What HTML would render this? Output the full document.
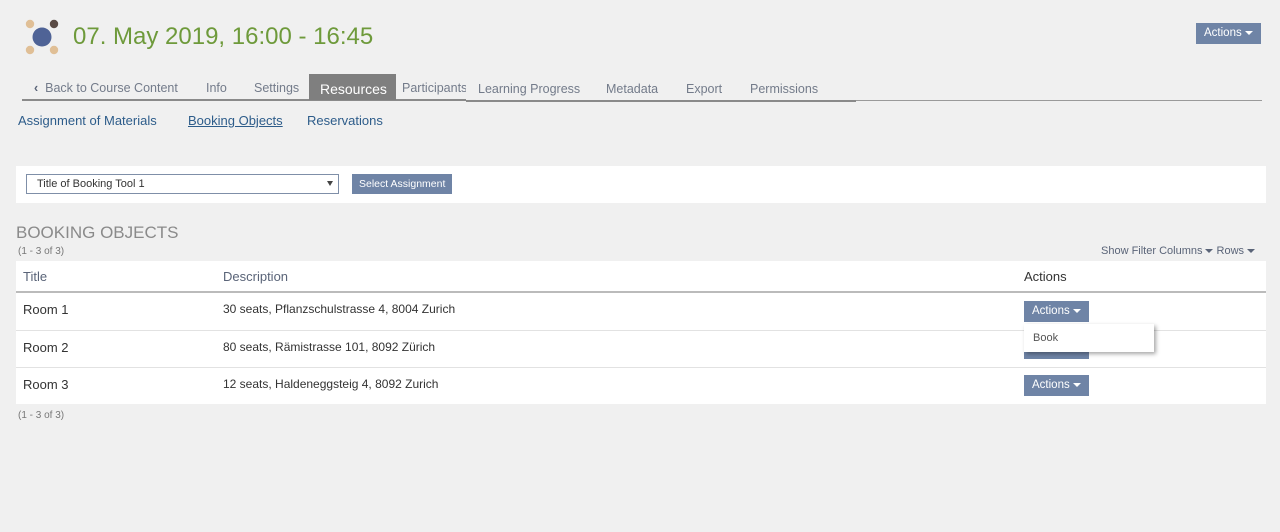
<!DOCTYPE html>
<html><head><meta charset="utf-8">
<style>
*{box-sizing:border-box;margin:0;padding:0}
body{width:1280px;height:532px;background:#f0f0f0;font-family:"Liberation Sans",sans-serif;position:relative;overflow:hidden;color:#333}
.a{position:absolute;white-space:nowrap}
.btn{position:absolute;background:#6f84a6;color:#fff;font-size:11.5px;line-height:21px;padding:0 8px;height:21px}
.car{display:inline-block;width:0;height:0;border-left:4px solid transparent;border-right:4px solid transparent;border-top:4px solid currentColor;vertical-align:middle;margin-left:3px}
.tab{position:absolute;top:81px;font-size:12.5px;color:#737b8a}
.sub{position:absolute;top:113px;font-size:13px;color:#2d5c8a}
.cell{position:absolute;font-size:13px;color:#333}
</style></head><body>
<svg class="a" style="left:24px;top:19px" width="38" height="36" viewBox="0 0 38 36">
<circle cx="6" cy="5" r="4.2" fill="#e0bf96"/><circle cx="30" cy="5" r="4.2" fill="#5a4a44"/>
<circle cx="6" cy="31" r="4.2" fill="#e0bf96"/><circle cx="30" cy="31" r="4.2" fill="#e0bf96"/>
<circle cx="18" cy="18" r="9.5" fill="#4f6396"/></svg>
<div class="a" style="left:73px;top:23px;font-size:24px;color:#6e9a3b">07. May 2019, 16:00 - 16:45</div>
<div class="btn" style="left:1196px;top:23px">Actions<span class="car"></span></div>

<div class="a" style="left:22px;top:99px;width:444px;height:2px;background:#8a8a8a"></div>
<div class="a" style="left:466px;top:100px;width:390px;height:2px;background:#8a8a8a"></div>
<div class="a" style="left:856px;top:100px;width:406px;height:1px;background:#9a9a9a"></div>
<div class="a" style="left:309px;top:74px;width:87px;height:26px;background:#7f7f7f"></div>
<div class="tab" style="left:34px"><span style="font-weight:bold;color:#5a6478">&#8249;</span>&nbsp; Back to Course Content</div>
<div class="tab" style="left:206px">Info</div>
<div class="tab" style="left:254px">Settings</div>
<div class="tab" style="left:320px;color:#fff;top:81px;font-size:14px">Resources</div>
<div class="tab" style="left:402px;width:64px;overflow:hidden">Participants</div>
<div class="tab" style="left:478px;top:82px">Learning Progress</div>
<div class="tab" style="left:606px;top:82px">Metadata</div>
<div class="tab" style="left:686px;top:82px">Export</div>
<div class="tab" style="left:750px;top:82px">Permissions</div>

<div class="sub" style="left:18px">Assignment of Materials</div>
<div class="sub" style="left:188px;text-decoration:underline">Booking Objects</div>
<div class="sub" style="left:307px">Reservations</div>

<div class="a" style="left:16px;top:166px;width:1250px;height:37px;background:#fff"></div>
<div class="a" style="left:26px;top:174px;width:313px;height:20px;border:1px solid #7f8fa8;background:#fff;font-size:11px;line-height:18px;padding-left:10px">Title of Booking Tool 1</div>
<div class="a" style="left:327px;top:181px;border-left:3px solid transparent;border-right:3px solid transparent;border-top:5px solid #444"></div>
<div class="btn" style="left:352px;top:174px;height:20px;line-height:20px;font-size:10.5px;padding:0 7px">Select Assignment</div>

<div class="a" style="left:16px;top:223px;font-size:17px;color:#8a8a8a">BOOKING OBJECTS</div>
<div class="a" style="left:18px;top:246px;font-size:10px;color:#777">(1 - 3 of 3)</div>
<div class="a" style="left:1101px;top:245px;font-size:11px;color:#5a6478">Show Filter&nbsp;Columns<span class="car"></span>&nbsp;Rows<span class="car"></span></div>

<div class="a" style="left:16px;top:261px;width:1250px;height:143px;background:#fff"></div>
<div class="a" style="left:16px;top:291px;width:1250px;height:2px;background:#bbb"></div>
<div class="a" style="left:16px;top:330px;width:1250px;height:1px;background:#e2e2e2"></div>
<div class="a" style="left:16px;top:367px;width:1250px;height:1px;background:#e2e2e2"></div>
<div class="cell" style="left:23px;top:269px;color:#5a6478">Title</div>
<div class="cell" style="left:223px;top:269px;color:#5a6478">Description</div>
<div class="cell" style="left:1024px;top:269px">Actions</div>
<div class="cell" style="left:23px;top:302px">Room 1</div>
<div class="cell" style="left:223px;top:302px;font-size:12px">30 seats, Pflanzschulstrasse 4, 8004 Zurich</div>
<div class="cell" style="left:23px;top:340px">Room 2</div>
<div class="cell" style="left:223px;top:340px;font-size:12px">80 seats, Rämistrasse 101, 8092 Zürich</div>
<div class="cell" style="left:23px;top:377px">Room 3</div>
<div class="cell" style="left:223px;top:377px;font-size:12px">12 seats, Haldeneggsteig 4, 8092 Zurich</div>
<div class="btn" style="left:1024px;top:301px">Actions<span class="car"></span></div>
<div class="btn" style="left:1024px;top:338px">Actions<span class="car"></span></div>
<div class="btn" style="left:1024px;top:375px">Actions<span class="car"></span></div>
<div class="a" style="left:1024px;top:324px;width:130px;height:28px;background:#fff;box-shadow:2px 2px 4px rgba(0,0,0,.35);font-size:11px;line-height:28px;padding-left:9px;color:#555">Book</div>

<div class="a" style="left:18px;top:410px;font-size:10px;color:#777">(1 - 3 of 3)</div>
</body></html>
